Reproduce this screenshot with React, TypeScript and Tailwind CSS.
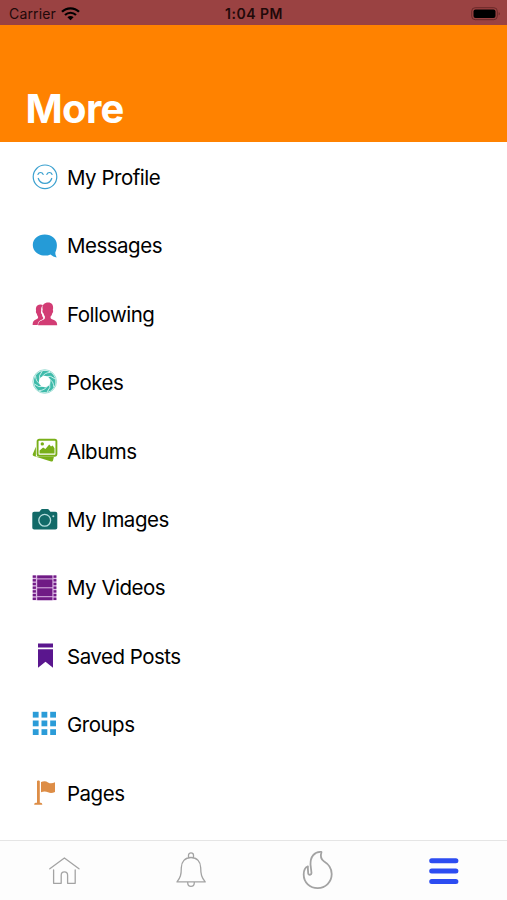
import type { ReactNode } from "react";

type MenuItem = {
  label: string;
  icon: ReactNode;
};

const perforations = [0.4, 4.1, 7.8, 11.5, 15.2, 18.9, 22.6];
const gridSteps = [0.8, 9.5, 18.2];
const bladeAngles = [0, 45, 90, 135, 180, 225, 270, 315];

const menuItems: MenuItem[] = [
  {
    label: "My Profile",
    icon: (
      <g fill="none" stroke="#3aa0cf" strokeLinecap="round">
        <circle cx="13" cy="12.8" r="11.8" strokeWidth="1.2" />
        <path d="M5.9 10.500c.9-2.700 4.400-2.700 5.300 0M14.800 10.500c.9-2.700 4.400-2.700 5.300 0" strokeWidth="1.1" />
        <path d="M6.300 14.500c2.200 6.500 11.200 6.500 13.400 0" strokeWidth="1.3" />
      </g>
    ),
  },
  {
    label: "Messages",
    icon: (
      <path
        fill="#259bd7"
        d="M12.800 1.600C6 1.600.8 6.100.8 12s5.200 10.600 12 10.600c2 0 4-.4 5.700-1.200 1.800 1.600 3.900 2.600 6.200 3-.9-1.500-1.400-3.100-1.400-5 1-1.900 1.600-4.400 1.600-7.400 0-5.900-5.300-10.400-12.100-10.400z"
      />
    ),
  },
  {
    label: "Following",
    icon: (
      <g fill="#d23c74">
        <path d="M11 4C8 2.600 4 4 3.900 7.500c-.1 1 .1 1.700.2 2.300-.6.800.1 2.600.7 2.900.3 1.500.8 2.200 1.300 3.100.2 1.700-.6 2.200-2.200 2.800C1.900 19.400.6 20.700.6 24h5.100c.3-3.400 1.800-4.400 5-5.700l.7-1.200c-1-1.200-1.300-2.600-1.500-3.800-.8-.7-1.200-2.300-.7-3.600-.2-2.200.2-4.200 1.800-5.700z" />
        <path d="M16.300 1.600c-4.100 0-6.200 2.400-5.800 5.800l.2 1.600c-.8.600-.1 2.900.7 3.300.3 1.400.9 2.400 1.500 3.300.2 2-.3 2.600-1.600 3.200-3.200 1.400-4.900 1.600-5.200 5.400h19.100c-.2-3.600-1.400-4.500-5.200-5.900-1.400-.6-1.600-1.200-1.400-2.700.8-.8 1.400-1.900 1.600-3.200.8-.4 1.400-2.700.6-3.300l.3-1.700c.3-3.500-1.500-5.800-4.800-5.800z" />
      </g>
    ),
  },
  {
    label: "Pokes",
    icon: (
      <g>
        <circle cx="12.7" cy="12.5" r="11.800" fill="none" stroke="#84d4c9" strokeWidth=".8" />
        <circle cx="12.7" cy="12.5" r="8.300" fill="none" stroke="#3fbbaa" strokeWidth="5" />
        {bladeAngles.map((angle) => (
          <path
            key={angle}
            d="M10 8.200Q12.500 3.500 18.300 3.400"
            fill="none"
            stroke="#d5f2ee"
            strokeWidth=".9"
            transform={`rotate(${angle} 12.7 12.5)`}
          />
        ))}
        <circle cx="12.7" cy="12.5" r="5.300" fill="#fff" />
      </g>
    ),
  },
  {
    label: "Albums",
    icon: (
      <g>
        <path
          fill="#79af19"
          d="M3.900 8.800.8 16.100c-.3.800 0 1.600.8 1.800l17.500 5.500c.9.300 1.700-.1 1.900-1l1-4H3.900z"
        />
        <rect x="4.600" y=".8" width="20.800" height="18" rx="2.600" fill="#fff" />
        <rect x="5.600" y="1.700" width="18.800" height="16" rx="1.600" fill="#fff" stroke="#79af19" strokeWidth="1.900" />
        <circle cx="10.300" cy="5.900" r="1.700" fill="#79af19" />
        <path fill="#79af19" d="M7.600 15.600v-3l3.500-3 2.300 1.500 3.800-4.600 1.800 1.900 1.700-.8 1.800 2.600v5.400z" />
      </g>
    ),
  },
  {
    label: "My Images",
    icon: (
      <g>
        <path
          fill="#126a68"
          d="M2.300 5.800h5.100L8.700 4c.4-.7.900-1 1.700-1h5c.8 0 1.300.3 1.700 1l1.300 1.800h4.900c1.300 0 2 .7 2 2v13.600c0 1.300-.7 2-2 2h-21c-1.300 0-2-.7-2-2V7.800c0-1.300.7-2 2-2z"
        />
        <circle cx="12.7" cy="14.300" r="5.900" fill="none" stroke="#b6dedd" strokeWidth="1.3" />
        <circle cx="21.300" cy="10.200" r="1" fill="#b6dedd" />
      </g>
    ),
  },
  {
    label: "My Videos",
    icon: (
      <g>
        <rect x=".7" y=".4" width="23.700" height="24.900" fill="#ddb9e6" />
        <g fill="#701b85">
          <rect x="5.200" y=".4" width="15.200" height="3" />
          <rect x="5.200" y="4.400" width="15.200" height="7.900" />
          <rect x="5.200" y="13.300" width="15.200" height="7.900" />
          <rect x="5.200" y="22.200" width="15.200" height="3" />
          {perforations.map((y) => (
            <g key={y}>
              <rect x=".7" y={y} width="3.200" height="2.400" />
              <rect x="21.500" y={y} width="2.900" height="2.400" />
            </g>
          ))}
        </g>
      </g>
    ),
  },
  {
    label: "Saved Posts",
    icon: <path fill="#5a168e" d="M6 .5h15v4H6zM6 6.200h15v18.500l-7.500-6-7.500 6z" />,
  },
  {
    label: "Groups",
    icon: (
      <g fill="#2b9cd8">
        {gridSteps.map((y) =>
          gridSteps.map((x) => <rect key={`${x}-${y}`} x={x} y={y} width="5.8" height="5.8" />),
        )}
      </g>
    ),
  },
  {
    label: "Pages",
    icon: (
      <g fill="#dd8d46">
        <path d="M5 1.300c0-1.200 2.800-1.200 2.800 0v21.500h1c.9 0 1.500.8 1.500 2H2.200c0-1.200.6-2 1.500-2H5z" />
        <path d="M9 2.100c3-1.300 5-.9 7 .3 2.300 1.300 4.500.9 7-.1V12c-2.500 1.200-4.700 1.500-7 .3-2.200-1.100-4.200-1.200-7 0z" />
      </g>
    ),
  },
];

export default function App() {
  return (
    <div className="flex h-[900px] w-[507px] flex-col overflow-hidden bg-white font-['Inter',sans-serif] text-black">
      <StatusBar />

      <header className="flex h-[117px] shrink-0 items-end bg-[#ff8200] px-[25.5px] pb-[9px]">
        <h1 className="text-[40px] font-bold leading-[48px] tracking-[-0.7px] text-white">More</h1>
      </header>

      <main className="min-h-0 flex-1 pt-px">
        <ul>
          {menuItems.map((item) => (
            <li key={item.label} className="flex h-[68.4px] items-center pl-8">
              <svg className="size-[26px] shrink-0" viewBox="0 0 26 26">
                {item.icon}
              </svg>
              <span className="pl-[9px] pt-[1.6px] text-[20.5px] leading-7 tracking-[-0.5px]">
                {item.label}
              </span>
            </li>
          ))}
        </ul>
      </main>

      <TabBar />
    </div>
  );
}

function StatusBar() {
  return (
    <div className="grid h-[25px] shrink-0 grid-cols-3 items-center bg-[#9a4242] pl-[9px] pr-[6px] pt-[2px] text-[#210909]">
      <div className="flex items-center gap-[5px]">
        <span className="text-[14px] leading-5 tracking-[0.15px]">Carrier</span>
        <svg className="h-[14px] w-[19px]" viewBox="0 0 19 14" fill="none" stroke="#000">
          <path d="M1 4.800c4.700-4.700 12.300-4.700 17 0" strokeWidth="2.3" />
          <path d="M4 8c3.100-3 7.900-3 11 0" strokeWidth="2.2" />
          <path d="M6.400 10.200c1.800-1.700 4.400-1.700 6.200 0L9.500 13.300z" fill="#000" stroke="none" />
        </svg>
      </div>
      <span className="-ml-[2px] text-center text-[14px] font-semibold leading-5 tracking-[0.5px]">
        1:04 PM
      </span>
      <svg className="h-[14px] w-[30px] justify-self-end" viewBox="0 0 30 14">
        <rect x=".7" y=".7" width="25.600" height="12" rx="3.500" fill="none" stroke="#6a2929" />
        <rect x="2.500" y="2.500" width="22" height="8.400" rx="2" fill="#000" />
        <path d="M27.700 5.200c1.500.5 1.500 2.500 0 3z" fill="#6a2929" />
      </svg>
    </div>
  );
}

function TabBar() {
  return (
    <nav className="grid h-[60px] shrink-0 grid-cols-4 items-center justify-items-center border-t border-[#e5e5e5] bg-[#fdfdfd] pb-px pl-px">
      <TabIcon>
        <path d="M5.800 18.800 20.400 7.900l14.600 10.900M9.600 20v13.300h7.600v-8c0-4.600 6.400-4.600 6.400 0v8h7.600V20" strokeWidth="1.3" />
      </TabIcon>
      <TabIcon>
        <path d="M17.500 7.700V5.300c0-3.300 5-3.300 5 0v2.400M20 7.500c-6 0-9.700 4.400-9.700 10.200 0 7-.8 9.800-4.300 14.200h28.200C30.700 27.500 29.700 24.700 29.700 17.700c0-5.800-3.700-10.200-9.700-10.200zM16.700 32.400c0 5.200 6.600 5.200 6.600 0" strokeWidth="1.3" />
      </TabIcon>
      <TabIcon>
        <path d="M24.500 2C17.300 1.300 13.300 7 13.500 14.500l1 8.500c.1 2-3.100 2.500-3.300.5-.2-2.100-.4-4.400-.3-7.200C7.700 17.700 6.700 20.800 6.700 24.500c0 8 6.200 13.600 14 13.600s14-6 14-14c0-6.100-3.100-9.800-7.500-12.500-3.700-2.400-4.100-5.400-2.700-9.600z" strokeWidth="1.8" />
      </TabIcon>
      <TabIcon>
        <path d="M7.700 10.700h24.200M7.700 21.100h24.200M7.700 31.500h24.200" stroke="#2c4cf1" strokeWidth="5" />
      </TabIcon>
    </nav>
  );
}

function TabIcon({ children }: { children: ReactNode }) {
  return (
    <svg
      className="size-10"
      viewBox="0 0 40 40"
      fill="none"
      stroke="#a3a3a3"
      strokeLinecap="round"
      strokeLinejoin="round"
    >
      {children}
    </svg>
  );
}
